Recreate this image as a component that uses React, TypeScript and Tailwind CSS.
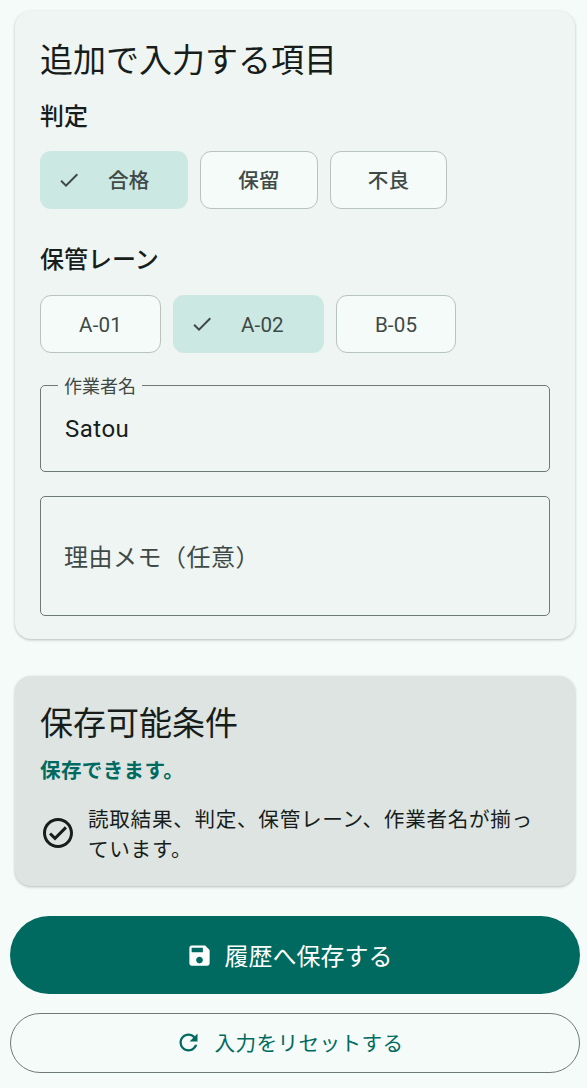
import React from 'react';

const CheckIcon = () => (
  <svg viewBox="0 0 24 24" className="w-[24px] h-[24px] fill-[#3f4946] shrink-0">
    <path d="M9 16.17 4.83 12l-1.42 1.41L9 19 21 7l-1.41-1.41z" />
  </svg>
);

const Chip = ({ label, selected, width }: { label: string; selected?: boolean; width: string }) => (
  <div
    className={`h-[58px] rounded-[11px] flex items-center text-[20.6px] font-[450] text-[#3f4946] tracking-[0.14px] ${width} ${
      selected ? 'bg-[#cce8e2] pl-[17px]' : 'bg-[#f5fbf8] border border-[#b9c3bf] justify-center'
    }`}
  >
    {selected && <CheckIcon />}
    <span className={selected ? 'ml-[27px] mt-[3px]' : 'mt-[3px]'}>{label}</span>
  </div>
);

export default function App() {
  return (
    <div className="w-[587px] h-[1088px] overflow-hidden bg-[#f5fbf8] font-['Roboto','Noto_Sans_CJK_JP',sans-serif] text-[#171d1b]">
      <div className="pl-[15px] w-[575px] pt-[11px]">
        <section className="bg-[#eff5f2] rounded-[16px] shadow-[0_1px_3px_rgba(0,0,0,0.25)] h-[628px] px-[25px] pt-[28px]">
          <h2 className="text-[33px] leading-[44px]">追加で入力する項目</h2>
          <h3 className="text-[24px] leading-[30px] font-[450] mt-[19px]">判定</h3>
          <div className="flex gap-[12px] mt-[19px]">
            <Chip label="合格" selected width="w-[148px]" />
            <Chip label="保留" width="w-[118px]" />
            <Chip label="不良" width="w-[117px]" />
          </div>
          <h3 className="text-[24px] leading-[30px] font-[450] mt-[36px]">保管レーン</h3>
          <div className="flex gap-[12px] mt-[20px]">
            <Chip label="A-01" width="w-[121px]" />
            <Chip label="A-02" selected width="w-[151px]" />
            <Chip label="B-05" width="w-[120px]" />
          </div>
          <div className="relative mt-[32px] h-[87px] border border-[#6f7976] rounded-[5px] flex items-center pl-[24px] pr-[23px]">
            <span className="absolute -top-[11px] left-[17px] px-[6px] bg-[#eff5f2] text-[18px] leading-[24px] text-[#3f4946]">
              作業者名
            </span>
            <span className="text-[24px] tracking-[0.5px]">Satou</span>
          </div>
          <div className="mt-[24px] h-[120px] border border-[#6f7976] rounded-[5px] flex items-center px-[23px]">
            <span className="text-[24px] text-[#3f4946] tracking-[0.5px] mt-[3px]">理由メモ（任意）</span>
          </div>
        </section>

        <section className="mt-[37px] bg-[#dee4e1] rounded-[16px] shadow-[0_1px_3px_rgba(0,0,0,0.25)] h-[210px] px-[25px] pt-[26px]">
          <h2 className="text-[33px] leading-[44px]">保存可能条件</h2>
          <p className="text-[20.6px] leading-[28px] font-bold text-[#006a60] mt-[11px] tracking-[0.3px]">保存できます。</p>
          <div className="flex items-center mt-[16px]">
            <svg viewBox="0 0 24 24" className="w-[36px] h-[36px] fill-[#171d1b] shrink-0">
              <path d="M12 2C6.48 2 2 6.48 2 12s4.48 10 10 10 10-4.48 10-10S17.52 2 12 2zm0 18c-4.41 0-8-3.59-8-8s3.59-8 8-8 8 3.59 8 8-3.59 8-8 8zm4.59-12.42L10 14.17l-2.59-2.58L6 13l4 4 8-8z" />
            </svg>
            <p className="ml-[12px] mt-[4px] text-[20.6px] leading-[30px] tracking-[0.7px]">
              読取結果、判定、保管レーン、作業者名が揃っています。
            </p>
          </div>
        </section>
      </div>

      <div className="pl-[10px] w-[580px] mt-[30px]">
        <button className="w-full h-[78px] pt-[4px] pr-[12px] rounded-full bg-[#006a60] text-white flex items-center justify-center text-[24px]">
          <svg viewBox="0 0 24 24" className="w-[27px] h-[27px] fill-white mr-[12px] -mt-[3px]">
            <path d="M17 3H5c-1.11 0-2 .9-2 2v14c0 1.1.89 2 2 2h14c1.1 0 2-.9 2-2V7l-4-4zm-5 16c-1.66 0-3-1.34-3-3s1.34-3 3-3 3 1.34 3 3-1.34 3-3 3zm3-10H5V5h10v4z" />
          </svg>
          履歴へ保存する
        </button>
        <button className="mt-[19px] w-full h-[60px] pr-[12px] pt-[2px] rounded-full border border-[#6f7976] text-[#006a60] flex items-center justify-center text-[20.6px] font-normal tracking-[0.4px]">
          <svg viewBox="0 0 24 24" className="w-[27px] h-[27px] fill-[#006a60] mr-[13px] -mt-[4px]">
            <path d="M17.65 6.35C16.2 4.9 14.21 4 12 4c-4.42 0-7.99 3.58-7.99 8s3.57 8 7.99 8c3.73 0 6.84-2.55 7.73-6h-2.08c-.82 2.33-3.04 4-5.65 4-3.31 0-6-2.69-6-6s2.69-6 6-6c1.66 0 3.14.69 4.22 1.78L13 11h7V4l-2.35 2.35z" />
          </svg>
          入力をリセットする
        </button>
      </div>
    </div>
  );
}
